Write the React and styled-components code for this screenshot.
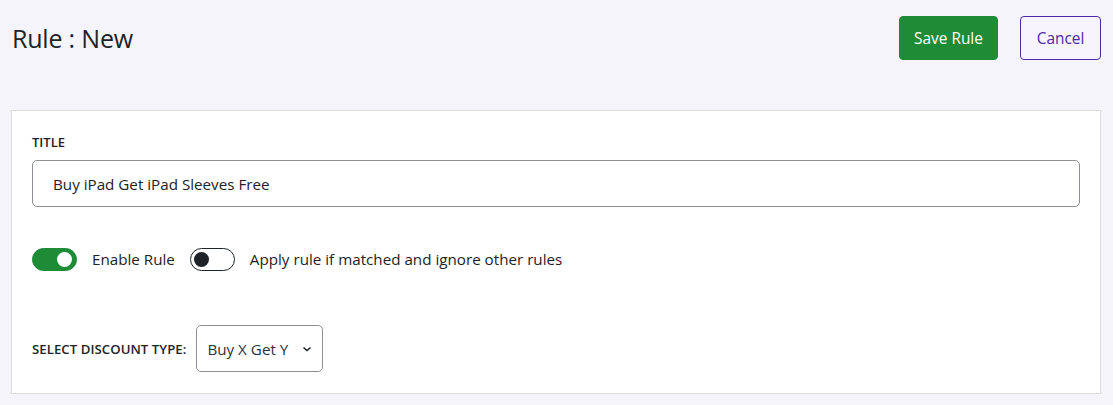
import React, { useState } from "react";
import styled, { createGlobalStyle } from "styled-components";

const GlobalStyle = createGlobalStyle`
  body {
    margin: 0;
    background: #f5f4fa;
    font-family: "Open Sans", "Noto Sans", sans-serif;
    color: #1d2327;
  }
`;

const Page = styled.div`
  width: 1113px;
  height: 405px;
  box-sizing: border-box;
  padding: 16px 12px 0 11px;
`;

const Header = styled.div`
  display: flex;
  align-items: center;
  justify-content: space-between;
  height: 44px;
  margin-bottom: 50px;
`;

const Heading = styled.h1`
  margin: 0 0 0 1px;
  font-size: 25px;
  font-weight: 500;
  color: #1d2327;
  letter-spacing: -0.2px;
`;

const Actions = styled.div`
  display: flex;
  gap: 22px;
`;

const Button = styled.button`
  height: 44px;
  padding: 0 14px;
  border-radius: 4px;
  font-family: inherit;
  font-size: 15.4px;
  cursor: pointer;
  border: 1px solid ${(p) => (p.primary ? "#1e8b37" : "#4b2aa3")};
  background: ${(p) => (p.primary ? "#1e8b37" : "#f7f4fe")};
  color: ${(p) => (p.primary ? "#ffffff" : "#4b2aa3")};
  font-weight: ${(p) => (p.primary ? 400 : 500)};
  min-width: ${(p) => (p.primary ? "99px" : "81px")};
`;

const Card = styled.div`
  background: #fff;
  border: 1px solid #dcdcde;
  padding: 20px;
  height: 284px;
  box-sizing: border-box;
`;

const Label = styled.label`
  display: block;
  font-size: 13px;
  line-height: 18px;
  font-weight: 600;
  color: #1d2327;
  margin: 2px 0 9px;
`;

const TextInput = styled.input`
  display: block;
  width: 100%;
  box-sizing: border-box;
  height: 47px;
  border: 1px solid #8c8f94;
  border-radius: 5px;
  padding: 0 20px;
  font-family: inherit;
  font-size: 15.2px;
  color: #1d2327;
  outline: none;
`;

const ToggleRow = styled.div`
  display: flex;
  align-items: center;
  margin-top: 40px;
  height: 24px;
`;

const ToggleItem = styled.label`
  display: flex;
  align-items: center;
  gap: 15px;
  margin-right: 15px;
  font-size: 15.2px;
  line-height: 20px;
  color: #1d2327;
  cursor: pointer;
`;

const Track = styled.span`
  position: relative;
  width: 45px;
  height: 23px;
  box-sizing: border-box;
  border-radius: 12px;
  background: ${(p) => (p.on ? "#1e8b37" : "#fff")};
  border: 1.5px solid ${(p) => (p.on ? "#1e8b37" : "#1d2327")};
  flex-shrink: 0;
`;

const Knob = styled.span`
  position: absolute;
  top: 50%;
  left: ${(p) => (p.on ? "24px" : "3px")};
  width: 15px;
  height: 15px;
  margin-top: -7.5px;
  border-radius: 50%;
  background: ${(p) => (p.on ? "#fff" : "#1d2327")};
`;

const SelectRow = styled.div`
  display: flex;
  align-items: center;
  gap: 10px;
  margin-top: 54px;
`;

const SelectLabel = styled.span`
  font-size: 13.2px;
  letter-spacing: 0.05px;
  font-weight: 600;
  color: #1d2327;
`;

const SelectBox = styled.div`
  display: flex;
  align-items: center;
  justify-content: space-between;
  width: 127px;
  height: 47px;
  box-sizing: border-box;
  border: 1px solid #8c8f94;
  border-radius: 5px;
  padding: 0 9px 0 10px;
  font-size: 15.2px;
  color: #2c3338;
`;

const Toggle = ({ on, onClick, children }) => (
  <ToggleItem onClick={onClick}>
    <Track on={on ? 1 : 0}>
      <Knob on={on ? 1 : 0} />
    </Track>
    <span>{children}</span>
  </ToggleItem>
);

export default function App() {
  const [enabled, setEnabled] = useState(true);
  const [exclusive, setExclusive] = useState(false);

  return (
    <>
      <GlobalStyle />
      <Page>
        <Header>
          <Heading>Rule : New</Heading>
          <Actions>
            <Button primary>Save Rule</Button>
            <Button>Cancel</Button>
          </Actions>
        </Header>
        <Card>
          <Label>TITLE</Label>
          <TextInput defaultValue="Buy iPad Get iPad Sleeves Free" />
          <ToggleRow>
            <Toggle on={enabled} onClick={() => setEnabled(!enabled)}>
              Enable Rule
            </Toggle>
            <Toggle on={exclusive} onClick={() => setExclusive(!exclusive)}>
              Apply rule if matched and ignore other rules
            </Toggle>
          </ToggleRow>
          <SelectRow>
            <SelectLabel>SELECT DISCOUNT TYPE:</SelectLabel>
            <SelectBox>
              <span>Buy X Get Y</span>
              <svg width="12" height="12" viewBox="0 0 12 12">
                <path
                  d="M2.5 4.5 L6 7.5 L9.5 4.5"
                  fill="none"
                  stroke="#1d2327"
                  strokeWidth="1.6"
                />
              </svg>
            </SelectBox>
          </SelectRow>
        </Card>
      </Page>
    </>
  );
}
